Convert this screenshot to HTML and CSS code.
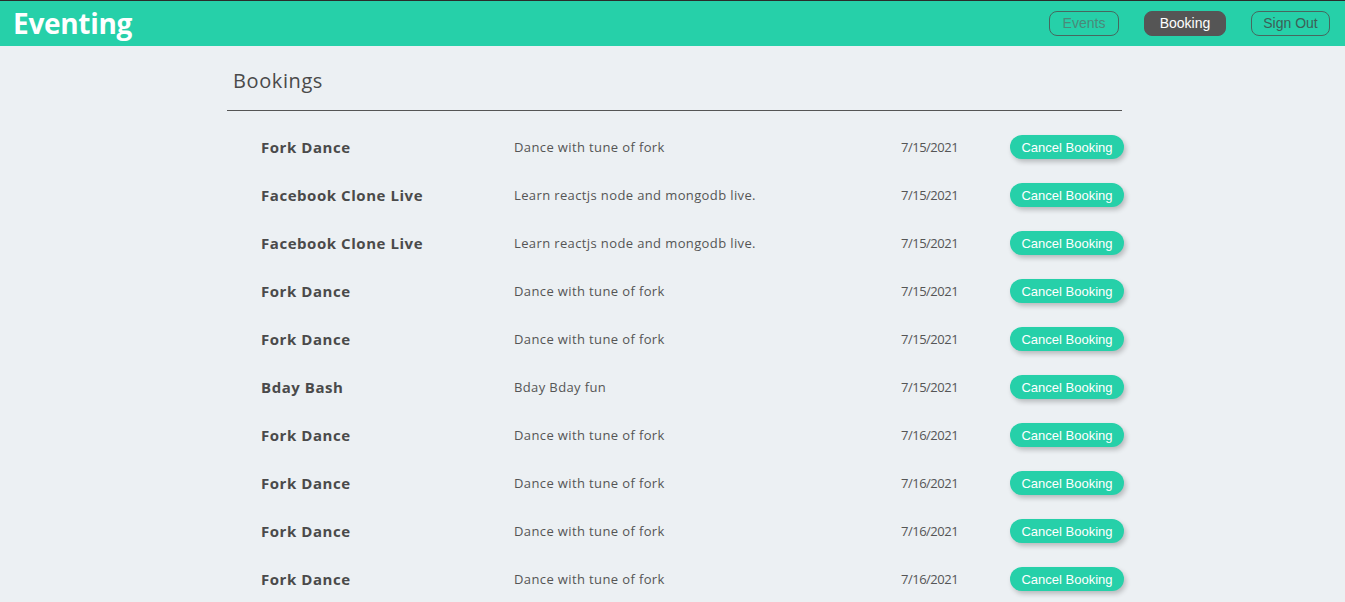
FILE: index.html
```html
<!DOCTYPE html>
<html>
<head>
<meta charset="utf-8">
<link rel="stylesheet" href="styles.css">
</head>
<body>
<header class="topbar">
  <div class="logo">Eventing</div>
  <nav class="nav">
    <button class="nav-btn">Events</button>
    <button class="nav-btn active">Booking</button>
    <button class="nav-btn">Sign Out</button>
  </nav>
</header>
<main class="content">
  <h1 class="page-title">Bookings</h1>
  <ul class="list">
    <li class="row"><span class="name">Fork Dance</span><span class="desc">Dance with tune of fork</span><span class="date">7/15/2021</span><button class="cancel">Cancel Booking</button></li>
    <li class="row"><span class="name">Facebook Clone Live</span><span class="desc">Learn reactjs node and mongodb live.</span><span class="date">7/15/2021</span><button class="cancel">Cancel Booking</button></li>
    <li class="row"><span class="name">Facebook Clone Live</span><span class="desc">Learn reactjs node and mongodb live.</span><span class="date">7/15/2021</span><button class="cancel">Cancel Booking</button></li>
    <li class="row"><span class="name">Fork Dance</span><span class="desc">Dance with tune of fork</span><span class="date">7/15/2021</span><button class="cancel">Cancel Booking</button></li>
    <li class="row"><span class="name">Fork Dance</span><span class="desc">Dance with tune of fork</span><span class="date">7/15/2021</span><button class="cancel">Cancel Booking</button></li>
    <li class="row"><span class="name">Bday Bash</span><span class="desc">Bday Bday fun</span><span class="date">7/15/2021</span><button class="cancel">Cancel Booking</button></li>
    <li class="row"><span class="name">Fork Dance</span><span class="desc">Dance with tune of fork</span><span class="date">7/16/2021</span><button class="cancel">Cancel Booking</button></li>
    <li class="row"><span class="name">Fork Dance</span><span class="desc">Dance with tune of fork</span><span class="date">7/16/2021</span><button class="cancel">Cancel Booking</button></li>
    <li class="row"><span class="name">Fork Dance</span><span class="desc">Dance with tune of fork</span><span class="date">7/16/2021</span><button class="cancel">Cancel Booking</button></li>
    <li class="row"><span class="name">Fork Dance</span><span class="desc">Dance with tune of fork</span><span class="date">7/16/2021</span><button class="cancel">Cancel Booking</button></li>
  </ul>
</main>
</body>
</html>
```
FILE: styles.css
```css
html, body {
  margin: 0;
  padding: 0;
}
body {
  background: #ecf0f3;
  font-family: "Open Sans", "DejaVu Sans", sans-serif;
  color: #4f4f4f;
  overflow: hidden;
}
.topbar {
  height: 45px;
  border-top: 1px solid #2b2b2b;
  background: #26d0a9;
  display: flex;
  align-items: center;
  justify-content: space-between;
  padding: 0 15px 0 13px;
}
.logo {
  font-size: 28px;
  font-weight: 700;
  color: #ffffff;
  letter-spacing: -0.3px;
  margin-top: -2px;
}
.nav {
  display: flex;
  gap: 25px;
  align-items: center;
  margin-top: -1px;
}
.nav-btn {
  font-family: "Liberation Sans", Arial, sans-serif;
  font-size: 14px;
  height: 25px;
  padding: 0;
  white-space: nowrap;
  border: 1px solid #46685f;
  border-radius: 8px;
  background: transparent;
  color: #3d5f57;
}
.nav-btn:first-child {
  color: #4a8979;
  width: 70px;
}
.nav-btn:last-child {
  width: 79px;
}
.nav-btn.active {
  background: #555555;
  border-color: #555555;
  color: #ffffff;
  width: 82px;
}
.content {
  width: 895px;
  margin: 0 auto 0 227px;
}
.page-title {
  margin: 0;
  padding: 21px 6px 16px;
  font-size: 20px;
  font-weight: 400;
  letter-spacing: 0.6px;
  color: #4a4a4a;
  border-bottom: 1px solid #555555;
}
.list {
  list-style: none;
  margin: 0;
  padding: 12px 0 0 34px;
}
.row {
  height: 48px;
  display: grid;
  grid-template-columns: 253px 387px 109px 114px;
  align-items: center;
}
.name {
  font-size: 15px;
  font-weight: 700;
  letter-spacing: 0.55px;
  color: #4a4a4a;
}
.desc, .date {
  font-size: 13px;
  color: #555555;
}
.desc {
  letter-spacing: 0.38px;
}
.date {
  letter-spacing: -0.5px;
}
.cancel {
  font-family: "Liberation Sans", Arial, sans-serif;
  font-size: 13px;
  color: #ffffff;
  background: #26d0a9;
  border: none;
  border-radius: 12px;
  height: 24px;
  width: 114px;
  padding: 0;
  box-shadow: 2px 3px 5px rgba(0, 0, 0, 0.22);
}
```
